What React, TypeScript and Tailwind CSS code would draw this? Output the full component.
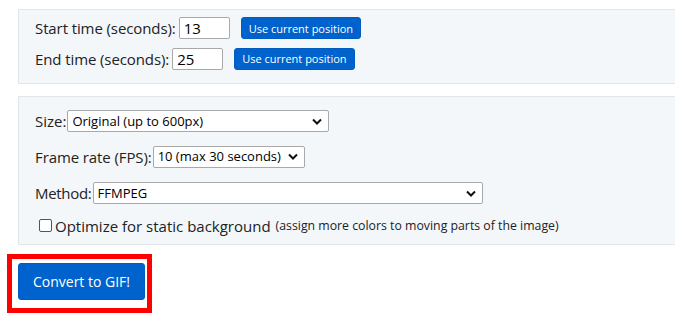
const font = { fontFamily: '"Open Sans", "Noto Sans", sans-serif' }

function UseButton() {
  return (
    <button className="ml-[11px] h-[22px] rounded-[3px] border border-[#005cbf] bg-[#0062cc] px-[7px] text-[11px] leading-none text-white">
      Use current position
    </button>
  )
}

function Select({ width, value }: { width: string; value: string }) {
  return (
    <div
      className={`${width} flex h-[22px] items-center justify-between rounded-[2px] border border-[#a9a9a9] bg-white pl-[4px] pr-[6px] text-[13px] text-black`}
    >
      <span>{value}</span>
      <svg width="10" height="7" viewBox="0 0 10 7">
        <path d="M1 1.5 L5 5.5 L9 1.5" fill="none" stroke="#111" strokeWidth="2" />
      </svg>
    </div>
  )
}

export default function App() {
  return (
    <div className="h-[322px] w-[675px] overflow-hidden bg-white text-[15px] text-[#222]" style={font}>
      <div className="pl-[18px] pt-[9px]">
        <div className="w-[700px] border border-[#e3e6e9] bg-[#f4f7fa] pb-[13px] pl-[16px] pt-[7px]">
          <div className="flex items-center">
            <span className="tracking-[-0.1px]">Start time (seconds):</span>
            <input
              readOnly
              value="13"
              className="ml-[3px] h-[22px] w-[51px] rounded-[2px] border border-[#a9a9a9] bg-white px-[4px] text-[15px] text-black outline-none"
            />
            <UseButton />
          </div>
          <div className="mt-[8px] flex items-center">
            <span className="tracking-[-0.1px]">End time (seconds):</span>
            <input
              readOnly
              value="25"
              className="ml-[3px] h-[22px] w-[51px] rounded-[2px] border border-[#a9a9a9] bg-white px-[4px] text-[15px] text-black outline-none"
            />
            <UseButton />
          </div>
        </div>

        <div className="mt-[12px] w-[700px] border border-[#e3e6e9] bg-[#f4f7fa] pb-[7px] pl-[16px] pt-[13px]">
          <div className="flex items-center gap-[1px]">
            <span>Size:</span>
            <Select width="w-[262px]" value="Original (up to 600px)" />
          </div>
          <div className="mt-[13px] flex items-center gap-[1px]">
            <span className="tracking-[-0.1px]">Frame rate (FPS):</span>
            <Select width="w-[152px]" value="10 (max 30 seconds)" />
          </div>
          <div className="mt-[14px] flex items-center gap-[1px]">
            <span className="tracking-[-0.3px]">Method:</span>
            <Select width="w-[390px]" value="FFMPEG" />
          </div>
          <div className="mt-[10px] flex items-center pl-[4px]">
            <span className="h-[13px] w-[13px] rounded-[2px] border border-[#555] bg-white" />
            <span className="ml-[3px]">Optimize for static background</span>
            <span className="ml-[5px] text-[12.3px]">(assign more colors to moving parts of the image)</span>
          </div>
        </div>
      </div>

      <div className="ml-[7px] mt-[9px] w-[145px] border-[5px] border-[#ff0000] pb-[8px] pl-[6px] pt-[4px]">
        <button className="h-[37px] w-[127px] rounded-[3px] border border-[#005cbf] bg-[#0062cc] text-[14px] text-white">
          Convert to GIF!
        </button>
      </div>
    </div>
  )
}
